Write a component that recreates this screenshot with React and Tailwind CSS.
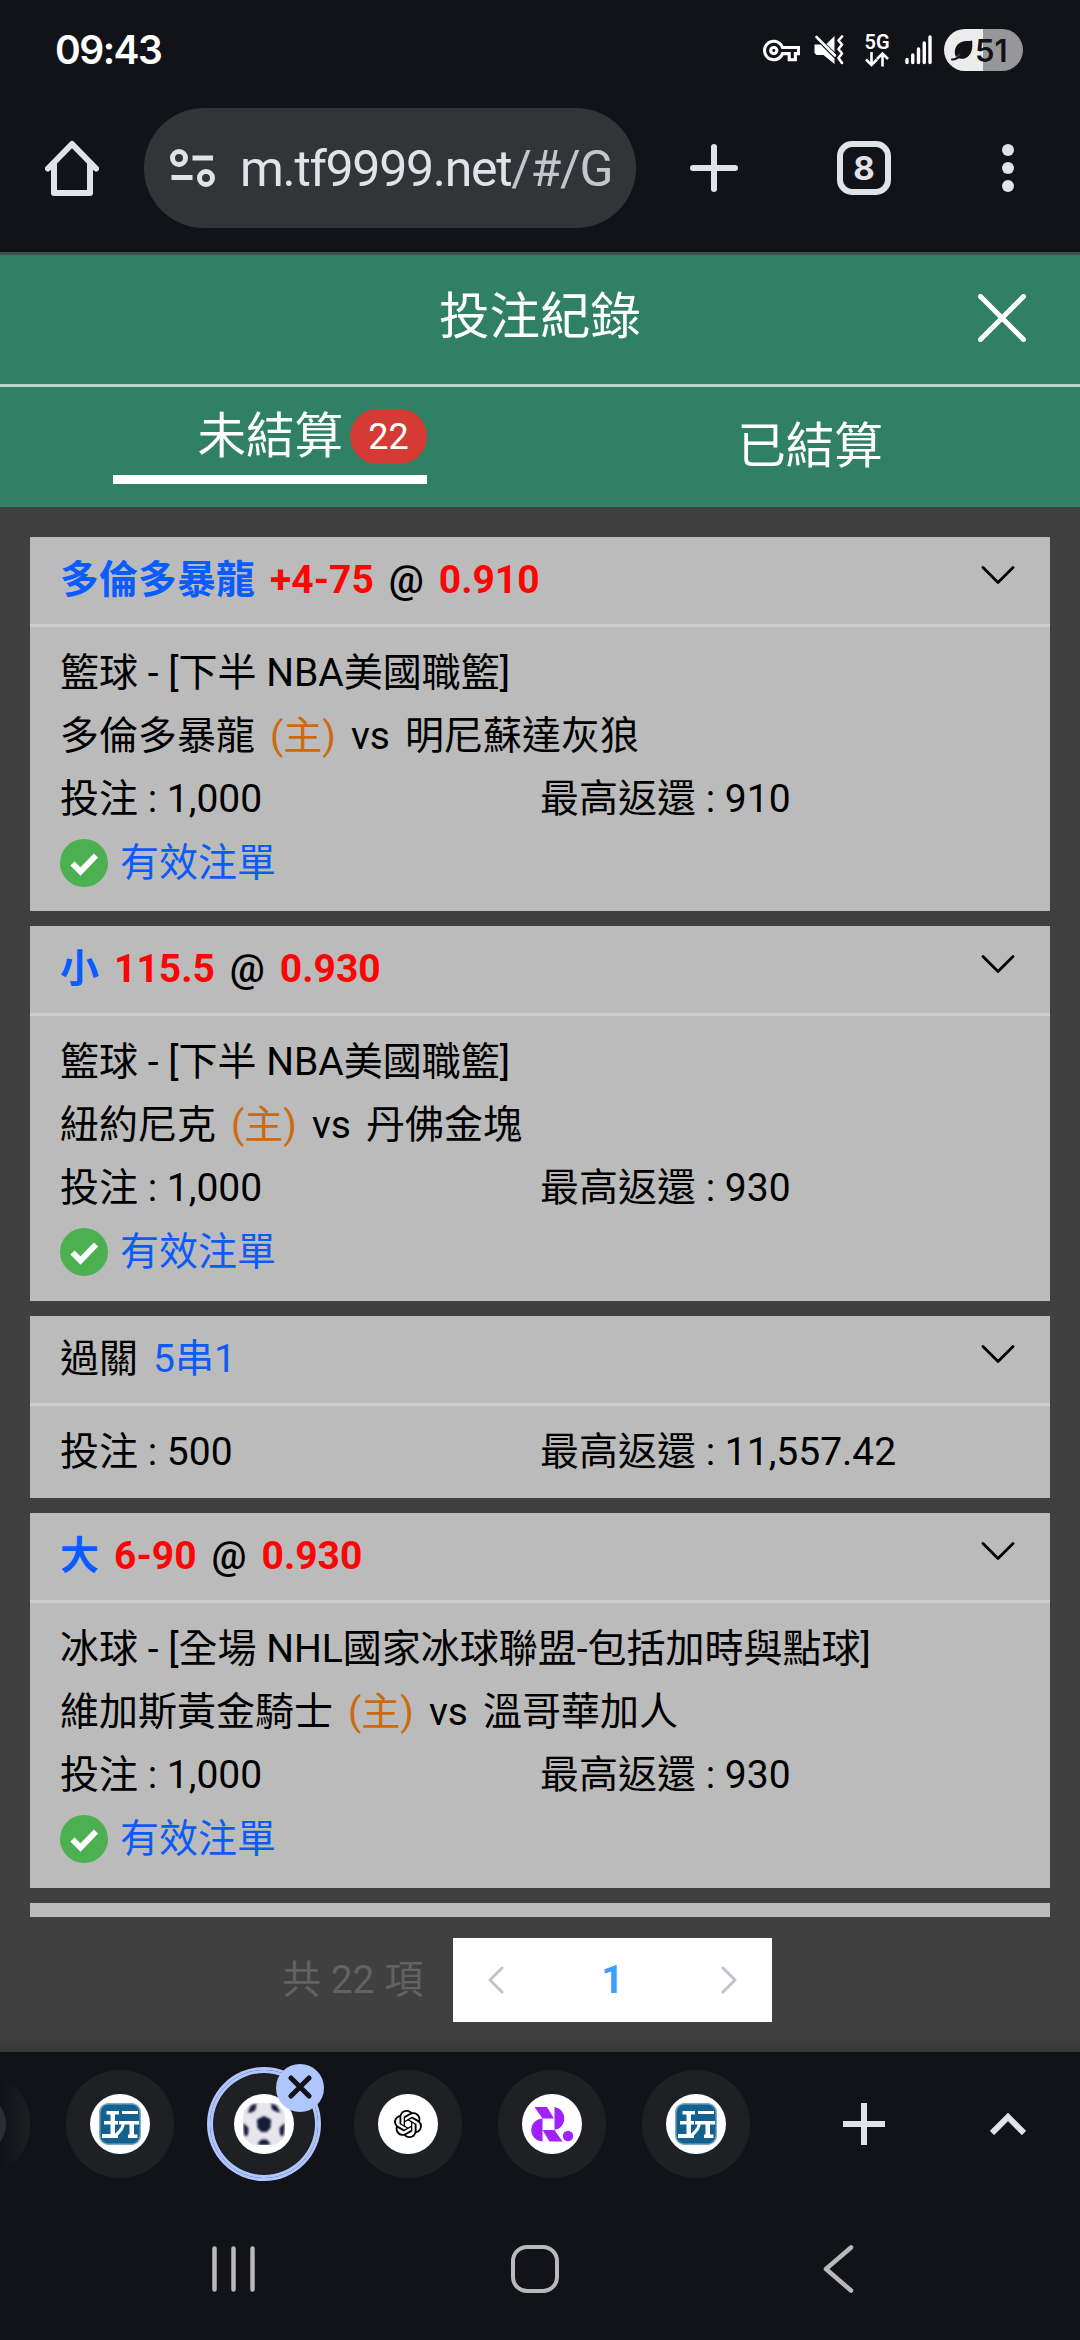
import React, { useState } from 'react';
import { MdOutlineVpnKey } from 'react-icons/md';
import { SiOpenai } from 'react-icons/si';

const bets = [
  {
    id: 1,
    pick: '多倫多暴龍',
    line: '+4-75',
    odds: '0.910',
    league: '籃球 - [下半 NBA美國職籃]',
    home: '多倫多暴龍',
    away: '明尼蘇達灰狼',
    stake: '1,000',
    payout: '910',
    height: 'h-[374px]',
  },
  {
    id: 2,
    pick: '小',
    line: '115.5',
    odds: '0.930',
    league: '籃球 - [下半 NBA美國職籃]',
    home: '紐約尼克',
    away: '丹佛金塊',
    stake: '1,000',
    payout: '930',
    height: 'h-[375px]',
  },
  { id: 3, parlay: '5串1', stake: '500', payout: '11,557.42', height: 'h-[182px]' },
  {
    id: 4,
    pick: '大',
    line: '6-90',
    odds: '0.930',
    league: '冰球 - [全場 NHL國家冰球聯盟-包括加時與點球]',
    home: '維加斯黃金騎士',
    away: '溫哥華加人',
    stake: '1,000',
    payout: '930',
    height: 'h-[375px]',
  },
];

const MuteIcon = () => (
  <svg className="w-[30px] h-[30px]" viewBox="0 0 30 30" fill="none" stroke="#fff">
    <path d="M0.5 9.5h6l14 14v5.5l-11-9h-7l-2-2z" fill="#fff" stroke="none" />
    <path d="M20.500 1v16L12.500 9z" fill="#fff" stroke="none" />
    <path d="M2.500 2l18.500 18.500" strokeWidth="2.600" strokeLinecap="round" />
    <path d="M28 1.500l-3.500 4 3.500 4-3.500 4.500 3.500 4.500-3.500 4.500 3.500 5" strokeWidth="2.600" strokeLinejoin="round" strokeLinecap="round" />
  </svg>
);

const StatusBar = () => (
  <div className="flex h-[100px] items-center pl-[55px] pr-[57px] text-white">
    <span className="font-['Inter'] text-[39px] font-semibold tracking-[-1.5px]">09:43</span>
    <div className="ml-auto flex items-center">
      <MdOutlineVpnKey className="w-[37px] h-[37px]" />
      <div className="ml-[14px]">
        <MuteIcon />
      </div>
      <div className="ml-5 flex w-[26px] flex-col items-center">
        <span className="font-['Roboto'] text-[20px] font-semibold leading-[18px]">5G</span>
        <svg className="w-[26px] h-4" viewBox="0 0 26 16" fill="none" stroke="#fff" strokeWidth="2.600">
          <path d="M7.500 1v13M2 8.500l5.500 5.500L13 8.500M18.500 15.500V2.500M13 8l5.500-5.500L24 8" />
        </svg>
      </div>
      <svg className="ml-[15px] w-[27px] h-[30px]" viewBox="0 0 27 30" stroke="#fff" strokeWidth="3.400" strokeLinecap="round">
        <path d="M2 24.500v3M7.750 20v7.500M13.500 14v13.500M19.250 8v19.500M25 2v25.500" />
      </svg>
      <div className="ml-3 flex h-[42px] w-[79px] items-center rounded-full bg-linear-to-r from-[#ececec] from-50% to-[#97979a] to-50% pl-[7px] text-[#121318]">
        <svg className="w-[22px] h-[21px]" viewBox="0 0 22 21">
          <path d="M21 0.500c1 7 0 13-4.500 16.500-3.500 2.500-7.500 2-9.500 1l6-6.500-8 5.500C2 11 5 4 10.500 2 14 0.500 17.500 1.500 21 0.500z" fill="#121318" />
          <path d="M1 19.500c4 0.500 7-2 12-8" stroke="#121318" strokeWidth="2" fill="none" strokeLinecap="round" />
        </svg>
        <span className="ml-0.5 font-['Inter'] text-[31px] font-semibold leading-none">51</span>
      </div>
    </div>
  </div>
);

const BrowserBar = () => (
  <div className="flex h-[152px] items-center pl-[45px] pb-4 text-[#e2e2e9]">
    <svg className="w-[54px] h-[56px]" viewBox="0 0 54 56" fill="none" stroke="#e2e2e9" strokeWidth="6" strokeLinecap="round" strokeLinejoin="round">
      <path d="M3 28.500L27 4l24 24.500M9 24v29h36V24" />
    </svg>
    <div className="ml-[45px] flex h-[120px] w-[492px] items-center rounded-full bg-[#333438] pl-[26px]">
      <svg className="w-[45px] h-[38px]" viewBox="0 0 45 38" fill="none" stroke="#e2e2e9" strokeWidth="5">
        <circle cx="9" cy="9" r="6.500" />
        <circle cx="36" cy="29" r="6.500" />
        <path d="M22.500 9H43M1.500 28.500h21" />
      </svg>
      <span className="ml-[25px] mt-0.5 whitespace-nowrap font-['Roboto'] text-[50px] leading-none tracking-[-1.3px]">
        m.tf9999.net<span className="text-[#c4c5cd]">/#/G</span>
      </span>
    </div>
    <svg className="ml-[54px] w-12 h-12" viewBox="0 0 48 48" stroke="#e2e2e9" strokeWidth="6" strokeLinecap="round">
      <path d="M24 3v42M3 24h42" />
    </svg>
    <div className="ml-[99px] flex h-[54px] w-[54px] items-center justify-center rounded-[15px] border-6 border-[#e2e2e9] font-['Inter'] text-[33px] font-bold leading-none">
      8
    </div>
    <svg className="ml-[111px] w-3 h-12" viewBox="0 0 12 48" fill="#e2e2e9">
      <circle cx="6" cy="6" r="6" />
      <circle cx="6" cy="24" r="6" />
      <circle cx="6" cy="42" r="6" />
    </svg>
  </div>
);

const PageHeader = ({ tab, setTab }) => (
  <div className="bg-[#308066] text-white">
    <div className="flex h-[135px] items-center border-t-3 border-b-3 border-t-[#3c524f] border-b-[#bcd3cb]">
      <div className="w-[102px]" />
      <h1 className="flex-1 pb-1 text-center text-[50.5px] leading-none">投注紀錄</h1>
      <button className="w-[102px] pb-1" aria-label="close">
        <svg className="w-12 h-12" viewBox="0 0 48 48" stroke="#fff" strokeWidth="5" strokeLinecap="round">
          <path d="M2.500 2.500l43 43M45.500 2.500l-43 43" />
        </svg>
      </button>
    </div>
    <div className="grid h-[120px] grid-cols-2">
      <button className="flex justify-center" onClick={() => setTab('open')}>
        <div className={`mt-[22px] h-[75px] w-[314px] ${tab === 'open' ? 'border-b-9 border-white' : ''}`}>
          <div className="flex items-center justify-end">
            <span className="whitespace-nowrap text-[48.5px] leading-[54px]">未結算</span>
            <span className="ml-[7px] flex h-[55px] w-[77px] items-center justify-center rounded-full bg-[#d63a34] text-[36px] leading-none">22</span>
          </div>
        </div>
      </button>
      <button className="text-[48.5px] leading-none" onClick={() => setTab('settled')}>已結算</button>
    </div>
  </div>
);

const Chevron = () => (
  <svg className="ml-auto mb-3 w-[34px] h-[18px]" viewBox="0 0 34 18" fill="none" stroke="#000" strokeWidth="2.800" strokeLinecap="round" strokeLinejoin="round">
    <path d="M2 1.500l15 15 15-15" />
  </svg>
);

const BetCard = ({ bet }) => (
  <div className={`shrink-0 bg-[#bbbbbb] ${bet.height}`}>
    <div className="flex h-[90px] items-center border-b-3 border-[#cdcdcd] pl-[30px] pr-[35px]">
      {bet.parlay ? (
        <div className="flex gap-[15px]">
          <span>過關</span>
          <span className="text-[#0d5bf5]">{bet.parlay}</span>
        </div>
      ) : (
        <div className="flex gap-[15px] font-bold">
          <span className="text-[#0a5cff]">{bet.pick}</span>
          <span className="text-[#fb0505]">{bet.line}</span>
          <span className="font-medium">@</span>
          <span className="text-[#fb0505]">{bet.odds}</span>
        </div>
      )}
      <Chevron />
    </div>
    <div className="px-[30px] pt-[15px] leading-[63px]">
      {bet.league && (
        <>
          <p>{bet.league}</p>
          <p className="flex gap-[15px]">
            <span>{bet.home}</span>
            <span className="text-[#cc6a10]">(主)</span>
            <span>vs</span>
            <span>{bet.away}</span>
          </p>
        </>
      )}
      <div className="grid grid-cols-2">
        <span>投注 : {bet.stake}</span>
        <span>最高返還 : {bet.payout}</span>
      </div>
      {bet.league && (
        <div className="mt-px flex items-center gap-3 text-[#0d5bf5]">
          <svg className="mb-0.5 w-12 h-12" viewBox="0 0 48 48">
            <circle cx="24" cy="24" r="24" fill="#4caf50" />
            <path d="M12.500 24.500l8 8 15.500-16" fill="none" stroke="#fff" strokeWidth="6" />
          </svg>
          <span>有效注單</span>
        </div>
      )}
    </div>
  </div>
);

const Pagination = () => (
  <div className="flex h-[135px] items-start bg-linear-to-b from-[#404040] from-90% to-[#393939] pl-[282px] pt-[21px]">
    <span className="w-[171px] text-[#626262] leading-[84px]">共 22 項</span>
    <div className="flex h-[84px] w-[319px] items-center justify-between bg-white px-[35px]">
      <svg className="w-4 h-7" viewBox="0 0 16 28" fill="none" stroke="#c0c4cc" strokeWidth="3" strokeLinecap="round" strokeLinejoin="round">
        <path d="M14 2L2 14l12 12" />
      </svg>
      <span className="font-bold text-[#409eff]">1</span>
      <svg className="w-4 h-7" viewBox="0 0 16 28" fill="none" stroke="#c0c4cc" strokeWidth="3" strokeLinecap="round" strokeLinejoin="round">
        <path d="M2 2l12 12L2 26" />
      </svg>
    </div>
  </div>
);

const PlayLogo = () => (
  <svg className="w-[42px] h-[42px]" viewBox="0 0 42 42" fill="#fff">
    <rect width="42" height="42" rx="9" fill="#7fa9c6" />
    <rect x="1.500" y="1.500" width="39" height="39" rx="8" fill="#14608f" />
    <rect x="7.500" y="8" width="12.500" height="3.500" />
    <rect x="11.500" y="8" width="4.500" height="25" />
    <rect x="5" y="18" width="14" height="3.500" />
    <rect x="3" y="31" width="16" height="4" />
    <rect x="23" y="8" width="16" height="3" />
    <rect x="20" y="18" width="20" height="3.500" />
    <path d="M24.500 20c-0.500 5-3 8-6.500 11l-3.500 3" stroke="#fff" strokeWidth="3" fill="none" />
    <rect x="30.500" y="20" width="4.500" height="13" />
    <rect x="29" y="31.500" width="9.500" height="3.500" />
  </svg>
);

const BallLogo = () => (
  <svg className="w-[42px] h-[42px]" viewBox="0 0 42 42" fill="#141b3c">
    <rect width="42" height="42" rx="14" fill="#e6e6ec" />
    <g className="blur-[0.8px]">
      <path d="M21 13l7 3.500L27.500 25l-4 4h-5l-4-4L14 16.500z" />
      <path d="M4.500 9.500L8 2.500l5.500-2-1 6.500-4 2.500zM28 0.500l5.500 2 4 7-3.500-0.500-5-2.500zM0.500 20l5 5-0.500 7-3 1.500Q0 28 0.500 20zM41.500 20l-5 5 0.500 7 3 1.500Q42 28 41.500 20zM14.500 40.500l4-4h5l4 4-2 1.500h-9z" />
    </g>
  </svg>
);

const RLogo = () => (
  <svg className="w-[42px] h-[35px]" viewBox="0 0 42 35" fill="#a020ff">
    <path d="M3.500 0h12.500l7 11.500H11.500z" />
    <path d="M23.500 0c13 2.500 13 20.500 0 23z" />
    <path d="M11.500 11.500C-3.500 13-3.500 33 11.500 34.500z" />
    <path d="M11.500 23h12l8 11.500H18.500z" />
    <circle cx="37" cy="29" r="5.200" />
  </svg>
);

const favicons = [
  { id: 'play', icon: <PlayLogo /> },
  { id: 'ball', icon: <BallLogo />, active: true },
  { id: 'chat', icon: <SiOpenai className="w-[28px] h-[28px] text-black" /> },
  { id: 'r', icon: <RLogo /> },
  { id: 'play2', icon: <PlayLogo /> },
];

const TabStrip = () => (
  <div className="flex h-36 items-center overflow-hidden">
    {/* previous tab, scrolled mostly off the left edge */}
    <div className="-ml-[78px] flex h-[108px] w-[108px] shrink-0 items-center justify-center rounded-full bg-linear-to-r from-[#121318] from-75% to-[#1d1e22]">
      <div className="h-[60px] w-[60px] rounded-full bg-[#2c2d31]" />
    </div>
    <div className="ml-9 flex gap-9">
      {favicons.map((f) => (
        <div
          key={f.id}
          className={`relative flex h-[108px] w-[108px] items-center justify-center rounded-full bg-[#1f2024] ${f.active ? 'ring-[3px] ring-[#b0c6ff] inset-ring-[3px] inset-ring-[#b0c6ff]' : ''}`}
        >
          <div className="flex h-[60px] w-[60px] items-center justify-center rounded-full bg-white">{f.icon}</div>
          {f.active && (
            <div className="absolute -top-1.5 right-[-6px] flex h-12 w-12 items-center justify-center rounded-full bg-[#b0c6ff]">
              <svg className="w-6 h-6 -mt-0.5" viewBox="0 0 24 24" stroke="#121318" strokeWidth="5" strokeLinecap="round">
                <path d="M3 3l18 18M21 3L3 21" />
              </svg>
            </div>
          )}
        </div>
      ))}
    </div>
    <svg className="ml-[93px] w-[42px] h-[42px]" viewBox="0 0 42 42" stroke="#e2e2e9" strokeWidth="6">
      <path d="M21 0v42M0 21h42" />
    </svg>
    <svg className="ml-[105px] w-9 h-[22px]" viewBox="0 0 36 22" fill="none" stroke="#e2e2e9" strokeWidth="6">
      <path d="M2 20L18 4l16 16" />
    </svg>
  </div>
);

const NavBar = () => (
  <div className="flex h-36 items-center pl-[212px] pt-0.5">
    <svg className="w-[43px] h-12" viewBox="0 0 43 48" stroke="#b9b9bb" strokeWidth="4.500" strokeLinecap="round">
      <path d="M2.500 3.500v41M21.500 3.500v41M40.500 3.500v41" />
    </svg>
    <div className="ml-64 h-12 w-12 rounded-[16px] border-4 border-[#b9b9bb]" />
    <svg className="ml-[264px] w-[31px] h-12" viewBox="0 0 31 48" fill="none" stroke="#b9b9bb" strokeWidth="4.500" strokeLinecap="round" strokeLinejoin="round">
      <path d="M28 2.500L3 24l25 21.500" />
    </svg>
  </div>
);

export default function App() {
  const [tab, setTab] = useState('open');

  return (
    <div className="flex h-[2340px] w-[1080px] flex-col overflow-hidden bg-[#121318]">
      <StatusBar />
      <BrowserBar />
      <div className="flex h-[1800px] flex-col bg-[#404040] font-['Roboto','Noto_Sans_CJK_TC',sans-serif] text-[39px] text-black">
        <PageHeader tab={tab} setTab={setTab} />
        <div className="flex h-[1410px] flex-col gap-[15px] overflow-hidden px-[30px] pt-[30px]">
          {bets.map((bet) => (
            <BetCard key={bet.id} bet={bet} />
          ))}
          <div className="h-[90px] shrink-0 bg-[#bbbbbb]" />
        </div>
        <Pagination />
      </div>
      <TabStrip />
      <NavBar />
    </div>
  );
}
